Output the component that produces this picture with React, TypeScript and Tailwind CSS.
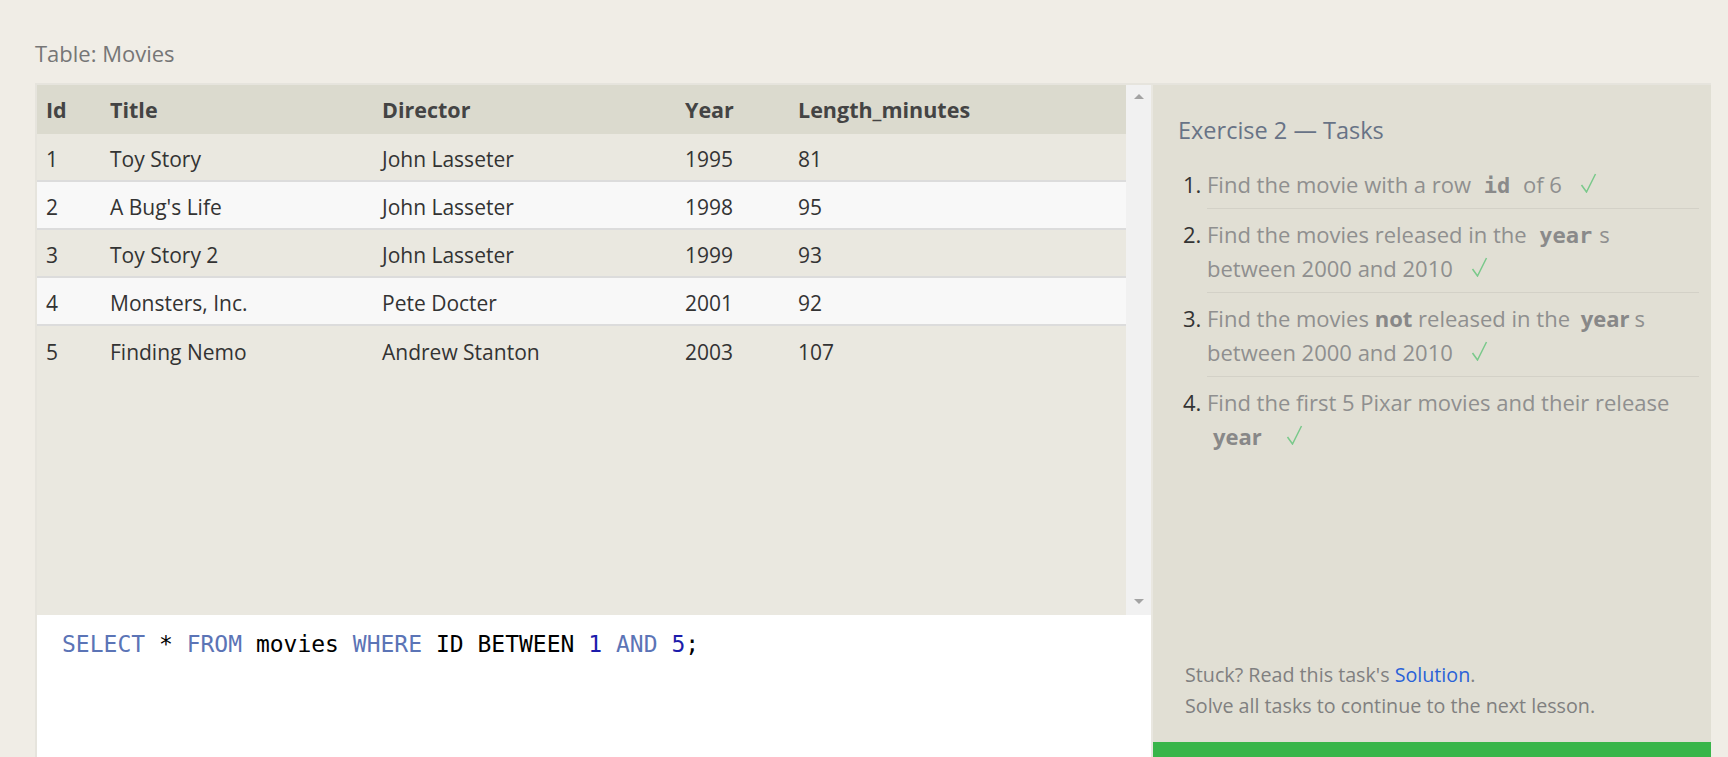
import React from "react";

// Ligne de la table Movies : id, titre, réalisateur, année, durée
const movies: [number, string, string, number, number][] = [
  [1, "Toy Story", "John Lasseter", 1995, 81],
  [2, "A Bug's Life", "John Lasseter", 1998, 95],
  [3, "Toy Story 2", "John Lasseter", 1999, 93],
  [4, "Monsters, Inc.", "Pete Docter", 2001, 92],
  [5, "Finding Nemo", "Andrew Stanton", 2003, 107],
];

const cols = "grid grid-cols-[64px_272px_303px_113px_1fr]";

function Check() {
  return (
    <svg className="inline-block align-baseline ml-[18px]" width="17" height="20" viewBox="0 0 17 20">
      <path d="M1.5 12 L6.5 19 L15.5 1" fill="none" stroke="#7ac98b" strokeWidth="1.5" />
    </svg>
  );
}

function Code({ children }: { children: React.ReactNode }) {
  return (
    <code className="px-[7px] leading-none font-['DejaVu_Sans_Mono',monospace] font-bold text-[22px] text-[#8a8a8a]">
      {children}
    </code>
  );
}

export default function App() {
  return (
    <div className="h-[757px] overflow-hidden bg-[#f0ede6] font-['Open_Sans',sans-serif]">
      <div className="pl-[35px] pr-[17px] pt-[38px]">
        <div className="h-[45px] text-[22px] leading-[30px] text-[#767676]">Table: Movies</div>

        <div className="flex border-t-2 border-l-2 border-[#e6e4dd]">
          {/* colonne gauche : résultat + éditeur */}
          <div className="w-[1114px] flex flex-col">
            <div className="flex h-[530px]">
              <div className="flex-1 bg-[#eae8e0] text-[21px]">
                <div className={`${cols} h-[49px] items-center pt-[2px] bg-[#dbdace] font-bold text-[21.5px] text-[#444]`}>
                  <div className="pl-[9px]">Id</div>
                  <div className="pl-[9px]">Title</div>
                  <div className="pl-[9px]">Director</div>
                  <div className="pl-[9px]">Year</div>
                  <div className="pl-[9px]">Length_minutes</div>
                </div>
                {movies.map((m, i) => (
                  <div
                    key={m[0]}
                    className={`${cols} h-[48px] items-center pt-[5px] text-[#333] ${
                      i % 2 === 1 ? "bg-[#f8f8f8]" : "bg-[#eae8e0]"
                    } ${i < movies.length - 1 ? "border-b-2 border-[#dcdcdc]" : ""}`}
                  >
                    {m.map((v, j) => (
                      <div key={j} className="pl-[9px]">
                        {v}
                      </div>
                    ))}
                  </div>
                ))}
              </div>
              <div className="w-[25px] bg-[#f1f1f1] flex flex-col items-center justify-between pt-[9px] pb-[11px]">
                <div className="w-0 h-0 border-l-[5px] border-r-[5px] border-b-[5px] border-l-transparent border-r-transparent border-b-[#a3a3a3]" />
                <div className="w-0 h-0 border-l-[5px] border-r-[5px] border-t-[5px] border-l-transparent border-r-transparent border-t-[#a3a3a3]" />
              </div>
            </div>
            <div className="h-[167px] bg-white pl-[25px] pt-[14px] font-['DejaVu_Sans_Mono',monospace] text-[23px] leading-[30px] text-black">
              <span className="text-[#5b74b6]">SELECT</span> * <span className="text-[#5b74b6]">FROM</span> movies{" "}
              <span className="text-[#5b74b6]">WHERE</span> ID BETWEEN <span className="text-[#1c1cab]">1</span>{" "}
              <span className="text-[#5b74b6]">AND</span> <span className="text-[#1c1cab]">5</span>;
            </div>
          </div>

          <div className="w-[2px] bg-[#e9e7e0]" />

          {/* panneau des exercices */}
          <div className="w-[558px] bg-[#e1dfd4] flex flex-col">
            <div className="pl-[25px] pt-[30px] text-[23.5px] leading-[30px] text-[#687386]">Exercise 2 — Tasks</div>
            <ol className="mt-[14px] ml-[29px] pl-[25px] pr-[12px] list-decimal text-[22px] leading-[34px] text-[#8f8f8f] marker:text-[#333]">
              <li className="pt-[8px] pb-[7px] border-b border-[#d3d1c7]">
                Find the movie with a row <Code>id</Code> of 6<Check />
              </li>
              <li className="pt-[8px] pb-[7px] border-b border-[#d3d1c7]">
                Find the movies released in the <Code>year</Code>s
                <br />
                between 2000 and 2010<Check />
              </li>
              <li className="pt-[8px] pb-[7px] border-b border-[#d3d1c7]">
                Find the movies <b className="text-[#888]">not</b> released in the{" "}
                <b className="px-[5px] text-[#888]">year</b>s
                <br />
                between 2000 and 2010<Check />
              </li>
              <li className="pt-[8px] pb-[7px]">
                Find the first 5 Pixar movies and their release
                <br />
                <b className="px-[6px] text-[#888]">year</b>
                <Check />
              </li>
            </ol>
            <div className="mt-auto pl-[32px] pb-[21px] text-[19.7px] leading-[31px] text-[#808080]">
              Stuck? Read this task's <a className="text-[#2a62d8]">Solution</a>.
              <br />
              Solve all tasks to continue to the next lesson.
            </div>
            <div className="h-[40px] bg-[#39b54a]" />
          </div>
        </div>
      </div>
    </div>
  );
}
